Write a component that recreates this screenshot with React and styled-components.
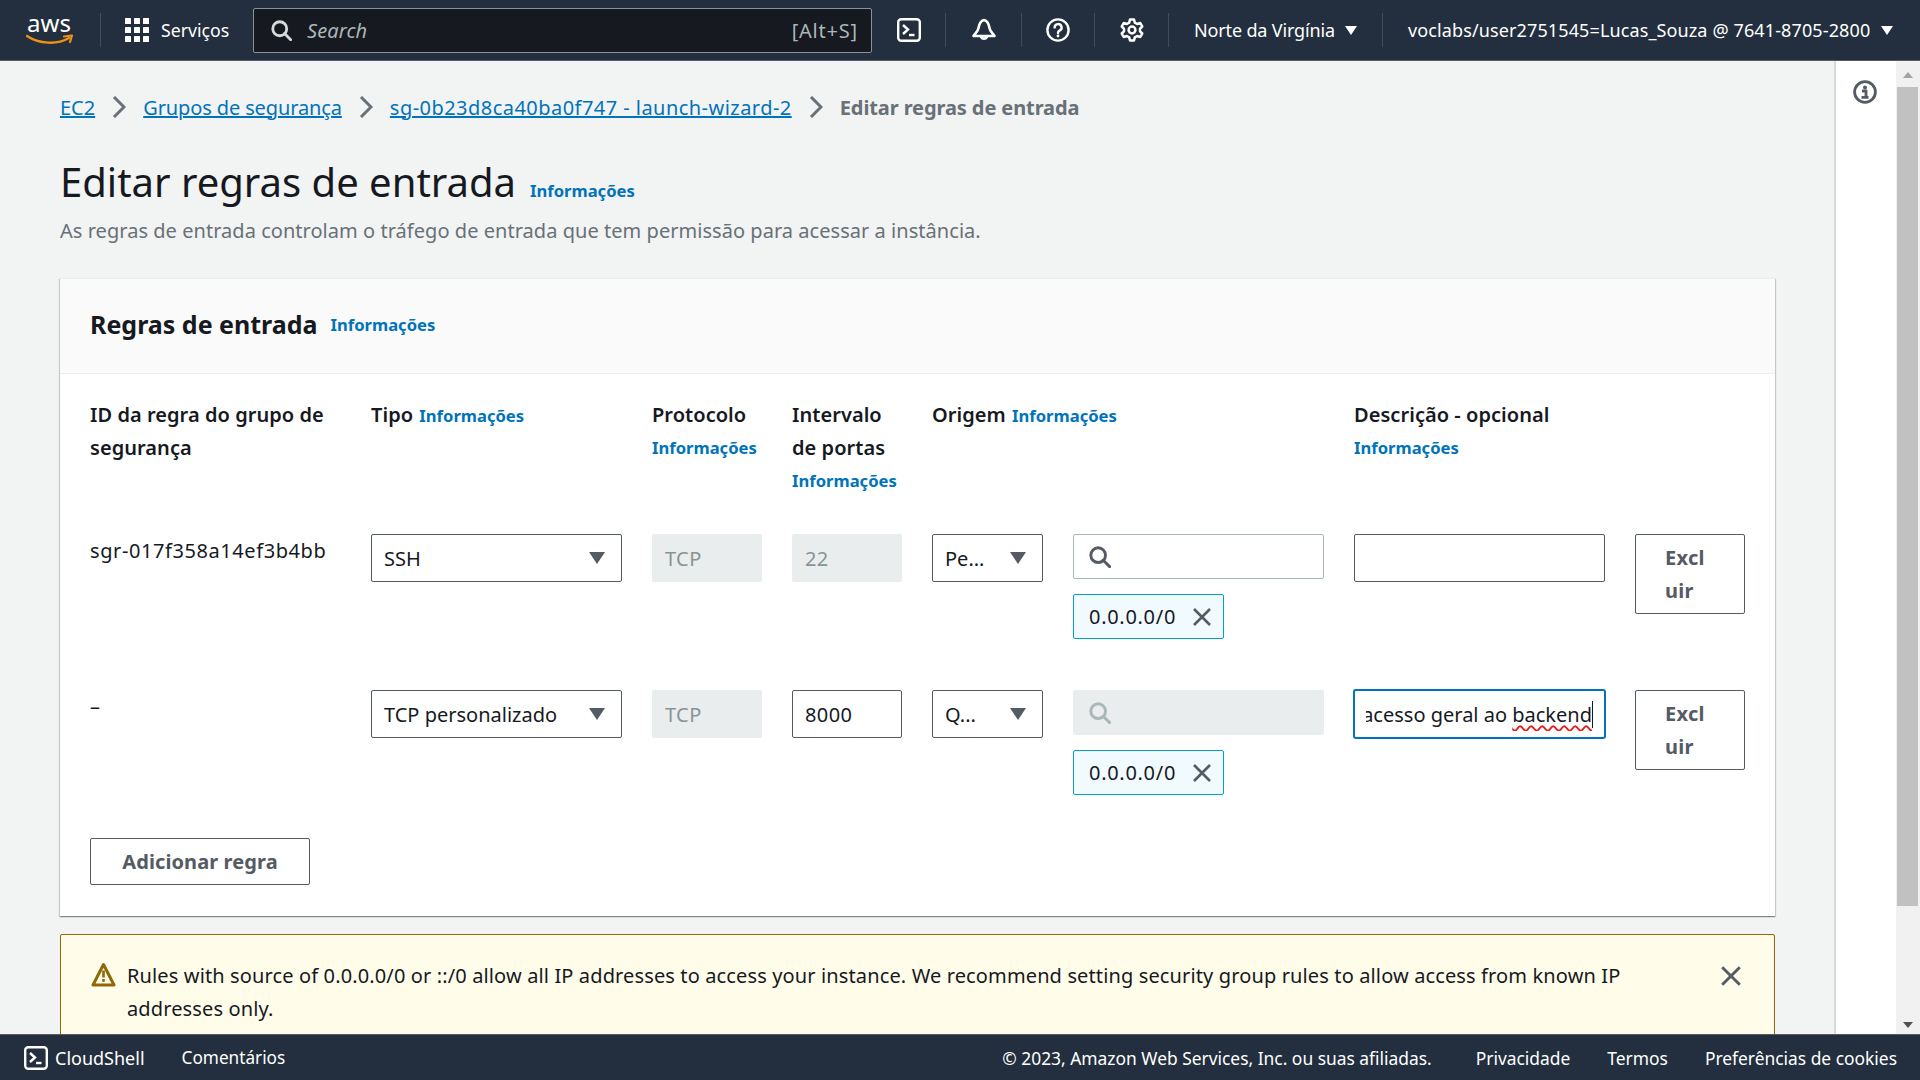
import React from 'react';
import styled, { createGlobalStyle } from 'styled-components';

const FONT = `"Noto Sans", "Open Sans", "Liberation Sans", sans-serif`;

const GlobalStyle = createGlobalStyle`
  html, body { margin: 0; padding: 0; height: 100%; overflow: hidden; }
  body { font-family: ${FONT}; font-size: 20px; color: #16191f; }
  * { box-sizing: border-box; }
`;

const Page = styled.div`
  display: flex;
  flex-direction: column;
  width: 1920px;
  height: 1080px;
  overflow: hidden;
  background: #f2f3f3;
`;

const TopBar = styled.header`
  flex: 0 0 61px;
  display: flex;
  align-items: center;
  background: #232f3e;
  border-bottom: 1px solid #545b64;
  color: #fff;
  font-size: 18px;
  padding-left: 26px;
`;

const LogoCell = styled.div`
  flex: 0 0 75px;
  height: 34px;
  display: flex;
  align-items: center;
  border-right: 1px solid #414d5c;
`;

const ServicesButton = styled.div`
  display: flex;
  align-items: center;
  gap: 12px;
  margin-left: 24px;
  width: 128px;
  font-size: 17.7px;
  white-space: nowrap;
`;

const SearchBox = styled.div`
  width: 619px;
  height: 45px;
  display: flex;
  align-items: center;
  padding: 0 13px 0 17px;
  background: #16191f;
  border: 1px solid #879596;
  border-radius: 2px;
  color: #aab7b8;
  font-size: 20px;
  letter-spacing: 0.8px;
`;

const SearchHint = styled.span`
  flex: 1;
  margin-left: 15px;
  font-style: italic;
  font-size: 20px;
  letter-spacing: 0.1px;
`;

const IconCell = styled.div`
  flex: 0 0 ${props => props.$width}px;
  height: 34px;
  display: flex;
  align-items: center;
  justify-content: center;
  border-right: 1px solid #414d5c;
`;

const MenuCell = styled.div`
  flex: 0 0 ${props => props.$width}px;
  height: 34px;
  display: flex;
  align-items: center;
  gap: ${props => props.$gap}px;
  padding-left: 25px;
  white-space: nowrap;
  letter-spacing: ${props => props.$spacing}px;
  border-right: ${props => props.$last ? 'none' : '1px solid #414d5c'};
`;

const Caret = styled.span`
  width: 0;
  height: 0;
  border-left: ${props => props.$size}px solid transparent;
  border-right: ${props => props.$size}px solid transparent;
  border-top: ${props => props.$size * 1.5}px solid ${props => props.$color || '#fff'};
  flex: none;
`;

const Body = styled.div`
  flex: 1;
  min-height: 0;
  display: flex;
  overflow: hidden;
`;

const Main = styled.main`
  flex: 0 0 1834px;
  padding: 29px 59px 0 60px;
  overflow: hidden;
`;

const SidePanel = styled.aside`
  flex: 0 0 62px;
  background: #fff;
  border-left: 2px solid #d5dbdb;
  display: flex;
  justify-content: center;
  padding: 19px 3px 0 0;
`;

const ScrollTrack = styled.div`
  flex: 0 0 24px;
  background: #f1f1f1;
  display: flex;
  flex-direction: column;
  align-items: center;
  padding: 11px 2px 6px 1px;
`;

const ScrollThumb = styled.div`
  width: 100%;
  height: 819px;
  margin-top: 9px;
  background: #c1c1c1;
`;

const ScrollDown = styled.div`
  margin-top: auto;
`;

const ScrollUpArrow = styled.div`
  width: 0;
  height: 0;
  border-left: 5px solid transparent;
  border-right: 5px solid transparent;
  border-bottom: 6px solid #a3a3a3;
`;

const ScrollDownArrow = styled.div`
  width: 0;
  height: 0;
  border-left: 5px solid transparent;
  border-right: 5px solid transparent;
  border-top: 6px solid #505050;
`;

const Breadcrumbs = styled.nav`
  height: 34px;
  display: flex;
  align-items: center;
  gap: 17px;
  white-space: nowrap;
  font-size: 20px;
`;

const Crumb = styled.a`
  color: #0073bb;
  text-decoration: underline;
  letter-spacing: ${props => props.$spacing || 0}px;
`;

const CurrentCrumb = styled.span`
  color: #687078;
  font-weight: 700;
  letter-spacing: -0.1px;
`;

const TitleRow = styled.div`
  display: flex;
  align-items: baseline;
  gap: 14px;
  margin-top: 32px;
  height: 52px;
`;

const PageTitle = styled.h1`
  margin: 0;
  font-size: 40px;
  font-weight: 400;
  line-height: 52px;
  color: #16191f;
`;

const InfoLink = styled.a`
  color: #0073bb;
  font-size: 16.6px;
  font-weight: 700;
  white-space: nowrap;
`;

const PageDescription = styled.p`
  margin: 6px 0 0;
  font-size: 20px;
  line-height: 33px;
  letter-spacing: 0.04px;
  color: #687078;
`;

const Card = styled.section`
  margin-top: 31px;
  background: #fff;
  border-top: 1px solid #eaeded;
  box-shadow: 0 1px 1px 0 rgba(0, 28, 36, 0.3), 1px 1px 1px 0 rgba(0, 28, 36, 0.15), -1px 1px 1px 0 rgba(0, 28, 36, 0.15);
`;

const CardHeader = styled.div`
  height: 95px;
  display: flex;
  align-items: center;
  gap: 13px;
  padding: 0 30px 4px;
  background: #fafafa;
  border-bottom: 1px solid #eaeded;
`;

const CardTitle = styled.h2`
  margin: 0;
  font-size: 25px;
  font-weight: 700;
  color: #16191f;
`;

const CardBody = styled.div`
  padding: 24px 30px 31px;
`;

const RuleGrid = styled.div`
  display: grid;
  grid-template-columns: 251px 251px 110px 110px 111px 251px 251px 110px;
  column-gap: 30px;
  row-gap: 51px;
  line-height: 33px;
`;

const HeaderCell = styled.div`
  font-size: 20px;
  font-weight: 600;
  letter-spacing: 0.05px;
  color: #16191f;
  grid-column: span ${props => props.$span || 1};
`;

const HeaderStrip = styled.div`
  grid-column: 1 / -1;
  display: grid;
  grid-template-columns: inherit;
  column-gap: 30px;
  height: 136px;
  margin-bottom: -51px;
`;

const InlineInfo = styled(InfoLink)`
  display: ${props => props.$block ? 'block' : 'inline'};
  margin-left: ${props => props.$block ? '0' : '1px'};
  letter-spacing: 0;
`;

const RuleId = styled.div`
  font-size: 20px;
  color: #16191f;
  white-space: nowrap;
  letter-spacing: 0.58px;
`;

const Select = styled.div`
  height: 48px;
  display: flex;
  align-items: center;
  justify-content: space-between;
  padding: 0 16px 0 12px;
  background: #fff;
  border: 1px solid #545b64;
  border-radius: 2px;
  font-size: 20px;
  color: #16191f;
  white-space: nowrap;
`;

const ReadOnlyField = styled.div`
  height: 48px;
  display: flex;
  align-items: center;
  padding: 0 12px;
  background: ${props => props.$editable ? '#fff' : '#eaeded'};
  border: 1px solid ${props => props.$editable ? '#545b64' : '#eaeded'};
  border-radius: 2px;
  font-size: 20px;
  letter-spacing: 0.4px;
  color: ${props => props.$editable ? '#16191f' : '#879596'};
`;

const SourceColumn = styled.div`
  display: flex;
  flex-direction: column;
  align-items: flex-start;
`;

const SourceSearch = styled.div`
  width: 100%;
  height: 45px;
  display: flex;
  align-items: center;
  padding-left: 15px;
  background: ${props => props.$disabled ? '#eaeded' : '#fff'};
  border: 1px solid ${props => props.$disabled ? '#eaeded' : '#aab7b8'};
  border-radius: 2px;
`;

const Token = styled.div`
  width: 151px;
  height: 45px;
  margin-top: 15px;
  display: flex;
  align-items: center;
  justify-content: space-between;
  padding: 0 11px 0 15px;
  background: #f1faff;
  border: 1px solid #00a1c9;
  border-radius: 2px;
  font-size: 20px;
  letter-spacing: 0.7px;
  color: #16191f;
`;

const DescriptionInput = styled.div`
  height: 48px;
  background: #fff;
  border: 1px solid #545b64;
  border-radius: 2px;
`;

const FocusedInput = styled.div`
  height: 50px;
  margin: -1px -1px 0;
  display: flex;
  align-items: center;
  justify-content: flex-end;
  padding: 0 11px;
  overflow: hidden;
  background: #fff;
  border: 2px solid #0073bb;
  border-radius: 3px;
  font-size: 20px;
  color: #16191f;
  white-space: nowrap;
`;

const ClippedText = styled.div`
  overflow: hidden;
  display: flex;
  justify-content: flex-end;
  width: 100%;
`;

const Misspelled = styled.span`
  text-decoration: underline wavy #e0201c;
  text-decoration-thickness: 1.5px;
  text-underline-offset: 3px;
  border-right: 1px solid #16191f;
`;

const DeleteButton = styled.button`
  height: 80px;
  padding: 0 0 0 29px;
  text-align: left;
  background: #fff;
  border: 1px solid #545b64;
  border-radius: 2px;
  font-family: inherit;
  font-size: 20px;
  font-weight: 700;
  line-height: 33px;
  letter-spacing: 0.3px;
  color: #545b64;
`;

const AddButton = styled.button`
  display: block;
  width: 220px;
  height: 47px;
  margin-top: 43px;
  background: #fff;
  border: 1px solid #545b64;
  border-radius: 2px;
  font-family: inherit;
  font-size: 20px;
  font-weight: 700;
  letter-spacing: 0.1px;
  color: #545b64;
`;

const Alert = styled.div`
  position: relative;
  margin-top: 18px;
  min-height: 130px;
  display: flex;
  gap: 11px;
  padding: 24px 120px 0 30px;
  background: #fffce9;
  border: 1px solid #906806;
  border-radius: 2px;
  font-size: 20px;
  line-height: 33px;
  letter-spacing: 0.13px;
  color: #16191f;
`;

const AlertIcon = styled.div`
  flex: none;
  height: 33px;
  padding-top: 3px;
`;

const AlertClose = styled.div`
  position: absolute;
  top: 30px;
  right: 32px;
  line-height: 0;
`;

const BottomBar = styled.footer`
  flex: 0 0 46px;
  display: flex;
  align-items: center;
  padding: 0 23px 0 24px;
  background: #232f3e;
  border-top: 1px solid #545b64;
  color: #fff;
  font-size: 17.4px;
  white-space: nowrap;
`;

const ShellLink = styled.span`
  display: flex;
  align-items: center;
  gap: 7px;
  font-size: 18px;
`;

const FeedbackLink = styled.span`
  margin-left: 37px;
  font-size: 17.2px;
`;

const FooterLinks = styled.div`
  margin-left: auto;
  display: flex;
  gap: 37px;
`;

const Copyright = styled.span`
  margin-right: 7px;
`;

function AwsLogo() {
  return <svg width="48" height="48" viewBox="0 0 48 48">
    <text x="1" y="26" fontFamily={FONT} fontSize="24" fill="#fff" textLength="44" lengthAdjust="spacingAndGlyphs">aws</text>
    <path d="M1 30 C13 38 31 39 43 32" fill="none" stroke="#ec9213" strokeWidth="2.4" strokeLinecap="round" />
    <path d="M38 30.5 L46 29.5 L44 36" fill="none" stroke="#ec9213" strokeWidth="2.2" strokeLinecap="round" strokeLinejoin="round" />
  </svg>;
}

function GridIcon() {
  return <svg width="24" height="24" viewBox="0 0 24 24" fill="#fff">
    {[0, 9, 18].map(y => [0, 9, 18].map(x => <rect key={`${x}-${y}`} x={x} y={y} width="6" height="6" rx="0.6" />))}
  </svg>;
}

function SearchIcon({ color = '#545b64', size = 24 }) {
  return <svg width={size} height={size} viewBox="0 0 24 24" fill="none" stroke={color} strokeWidth="3.2">
    <circle cx="10" cy="10" r="8" />
    <path d="M15.5 15.5 L22.5 22.5" strokeLinecap="round" />
  </svg>;
}

function TerminalIcon({ size = 24 }) {
  return <svg width={size} height={size} viewBox="0 0 24 24" fill="none" stroke="#fff" strokeWidth="2.4">
    <rect x="1.2" y="1.2" width="21.6" height="21.6" rx="3" />
    <path d="M6 7 L11 11.5 L6 16" />
    <path d="M12 17 H17.5" />
  </svg>;
}

function BellIcon() {
  return <svg width="24" height="24" viewBox="0 0 24 24" fill="none" stroke="#fff" strokeWidth="2.6" strokeLinejoin="round">
    <path d="M12 2 C8 3 7 6.5 6.5 10 C6 13.5 3.5 15 1.5 18 H22.5 C20.5 15 18 13.5 17.5 10 C17 6.5 16 3 12 2 Z" />
    <path d="M9 18.5 A3.2 3.2 0 0 0 15 18.5" />
  </svg>;
}

function HelpIcon() {
  return <svg width="24" height="24" viewBox="0 0 24 24" fill="none" stroke="#fff" strokeWidth="2.4">
    <circle cx="12" cy="12" r="10.6" />
    <path d="M8.6 9.4 A3.5 3.4 0 1 1 13.8 12.4 C12.6 13.1 12 13.8 12 15" strokeLinecap="round" />
    <circle cx="12" cy="18" r="1.4" fill="#fff" stroke="none" />
  </svg>;
}

function GearIcon() {
  return <svg width="24" height="24" viewBox="0 0 24 24" fill="none" stroke="#fff" strokeWidth="2.5" strokeLinejoin="round">
    <path d="M10 1.5 H14 L14.8 4.6 L17.2 6 L20.3 5 L22.3 8.5 L20 10.7 V13.3 L22.3 15.5 L20.3 19 L17.2 18 L14.8 19.4 L14 22.5 H10 L9.2 19.4 L6.8 18 L3.7 19 L1.7 15.5 L4 13.3 V10.7 L1.7 8.5 L3.7 5 L6.8 6 L9.2 4.6 Z" />
    <circle cx="12" cy="12" r="3.4" />
  </svg>;
}

function InfoCircleIcon() {
  return <svg width="24" height="24" viewBox="0 0 24 24" fill="none" stroke="#545b64" strokeWidth="2.8">
    <circle cx="12" cy="12" r="10.4" />
    <circle cx="12" cy="7.4" r="2" fill="#545b64" stroke="none" />
    <path d="M9 11 H13 V17 M8.5 17.4 H15.5" />
  </svg>;
}

function CloseIcon({ size = 20 }) {
  return <svg width={size} height={size} viewBox="0 0 20 20" fill="none" stroke="#545b64" strokeWidth="2.6">
    <path d="M2 2 L18 18 M18 2 L2 18" />
  </svg>;
}

function WarningIcon() {
  return <svg width="25" height="25" viewBox="0 0 25 25">
    <path d="M12.5 2.5 L23 23 H2 Z" fill="none" stroke="#906806" strokeWidth="3" strokeLinejoin="round" />
    <rect x="11.2" y="8.5" width="2.6" height="7" fill="#906806" />
    <rect x="11.2" y="17" width="2.6" height="2.8" fill="#906806" />
  </svg>;
}

function Chevron() {
  return <svg width="14" height="22" viewBox="0 0 14 22" fill="none" stroke="#687078" strokeWidth="3">
    <path d="M2 1 L12 11 L2 21" />
  </svg>;
}

function RuleRow({ id, type, port, portEditable, source, disabledSearch, description }) {
  return <>
    <RuleId>{id}</RuleId>
    <Select>{type}<Caret $size={8} $color="#545b64" /></Select>
    <ReadOnlyField>TCP</ReadOnlyField>
    <ReadOnlyField $editable={portEditable}>{port}</ReadOnlyField>
    <Select>{source}<Caret $size={8} $color="#545b64" /></Select>
    <SourceColumn>
      <SourceSearch $disabled={disabledSearch}>
        <SearchIcon color={disabledSearch ? '#aab7b8' : '#545b64'} size={22} />
      </SourceSearch>
      <Token>0.0.0.0/0<CloseIcon /></Token>
    </SourceColumn>
    <div>
      {description
        ? <FocusedInput>
            <ClippedText><span>acesso geral ao <Misspelled>backend</Misspelled></span></ClippedText>
          </FocusedInput>
        : <DescriptionInput />}
    </div>
    <DeleteButton>Excl<br />uir</DeleteButton>
  </>;
}

export default function App() {
  return <Page>
    <GlobalStyle />
    <TopBar>
      <LogoCell><AwsLogo /></LogoCell>
      <ServicesButton><GridIcon />Serviços</ServicesButton>
      <SearchBox>
        <SearchIcon color="#d5dbdb" size={21} />
        <SearchHint>Search</SearchHint>
        [Alt+S]
      </SearchBox>
      <IconCell $width={74}><TerminalIcon /></IconCell>
      <IconCell $width={76}><BellIcon /></IconCell>
      <IconCell $width={73}><HelpIcon /></IconCell>
      <IconCell $width={74}><GearIcon /></IconCell>
      <MenuCell $width={214} $gap={10} $spacing={-0.15}>Norte da Virgínia<Caret $size={6.5} /></MenuCell>
      <MenuCell $width={520} $gap={11} $spacing={0.12} $last>voclabs/user2751545=Lucas_Souza @ 7641-8705-2800<Caret $size={6.5} /></MenuCell>
    </TopBar>
    <Body>
      <Main>
        <Breadcrumbs>
          <Crumb>EC2</Crumb><Chevron />
          <Crumb $spacing={-0.12}>Grupos de segurança</Crumb><Chevron />
          <Crumb $spacing={0.46}>sg-0b23d8ca40ba0f747 - launch-wizard-2</Crumb><Chevron />
          <CurrentCrumb>Editar regras de entrada</CurrentCrumb>
        </Breadcrumbs>
        <TitleRow>
          <PageTitle>Editar regras de entrada</PageTitle>
          <InfoLink>Informações</InfoLink>
        </TitleRow>
        <PageDescription>As regras de entrada controlam o tráfego de entrada que tem permissão para acessar a instância.</PageDescription>
        <Card>
          <CardHeader>
            <CardTitle>Regras de entrada</CardTitle>
            <InfoLink>Informações</InfoLink>
          </CardHeader>
          <CardBody>
            <RuleGrid>
              <HeaderStrip>
                <HeaderCell>ID da regra do grupo de segurança</HeaderCell>
                <HeaderCell>Tipo <InlineInfo>Informações</InlineInfo></HeaderCell>
                <HeaderCell>Protocolo <InlineInfo $block>Informações</InlineInfo></HeaderCell>
                <HeaderCell>Intervalo de portas <InlineInfo $block>Informações</InlineInfo></HeaderCell>
                <HeaderCell $span={2}>Origem <InlineInfo>Informações</InlineInfo></HeaderCell>
                <HeaderCell>Descrição - opcional <InlineInfo $block>Informações</InlineInfo></HeaderCell>
                <div />
              </HeaderStrip>
              <RuleRow id="sgr-017f358a14ef3b4bb" type="SSH" port="22" source="Pe..." />
              <RuleRow id="–" type="TCP personalizado" port="8000" portEditable source="Q..." disabledSearch description />
            </RuleGrid>
            <AddButton>Adicionar regra</AddButton>
          </CardBody>
        </Card>
        <Alert>
          <AlertIcon><WarningIcon /></AlertIcon>
          <div>Rules with source of 0.0.0.0/0 or ::/0 allow all IP addresses to access your instance. We recommend setting security group rules to allow access from known IP addresses only.</div>
          <AlertClose><CloseIcon size={22} /></AlertClose>
        </Alert>
      </Main>
      <SidePanel><InfoCircleIcon /></SidePanel>
      <ScrollTrack>
        <ScrollUpArrow />
        <ScrollThumb />
        <ScrollDown><ScrollDownArrow /></ScrollDown>
      </ScrollTrack>
    </Body>
    <BottomBar>
      <ShellLink><TerminalIcon />CloudShell</ShellLink>
      <FeedbackLink>Comentários</FeedbackLink>
      <FooterLinks>
        <Copyright>© 2023, Amazon Web Services, Inc. ou suas afiliadas.</Copyright>
        <span>Privacidade</span>
        <span>Termos</span>
        <span>Preferências de cookies</span>
      </FooterLinks>
    </BottomBar>
  </Page>;
}
